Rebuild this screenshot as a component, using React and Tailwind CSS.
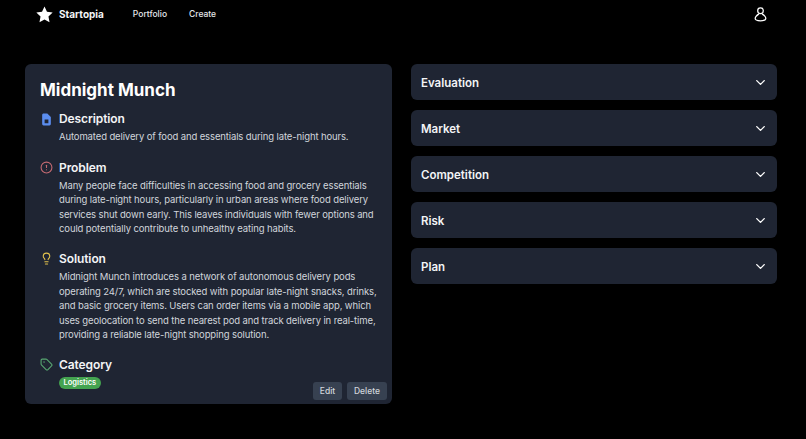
import React from 'react';
import { ChevronDown, CircleAlert, Lightbulb, Tag } from 'lucide-react';

const ACCORDION = ['Evaluation', 'Market', 'Competition', 'Risk', 'Plan'];

const DocIcon = () => (
  <svg viewBox="0 0 24 24" className="w-[13px] h-[13px]" fill="#5b8def">
    <path fillRule="evenodd" d="M6 1h7.500L20 7.500v13A2.500 2.500 0 0 1 17.500 23h-11A2.500 2.500 0 0 1 4 20.500v-17A2.500 2.500 0 0 1 6 1zM8.500 12v7h7v-7z" />
  </svg>
);

const UserIcon = () => (
  <svg viewBox="0 0 24 24" className="w-[15px] h-[15px]" fill="none" stroke="#ffffff" strokeWidth="2">
    <circle cx="12" cy="6" r="4.500" />
    <path d="M9.500 11C6.500 13 3.500 15 3.500 18.500c0 2.500 3.500 3.500 8.500 3.500s8.500-1 8.500-3.500c0-3.500-3-5.500-6-7.500" />
  </svg>
);

const Section = ({ icon, title, className = '', children }) => (
  <section className={className}>
    <div className="flex items-center h-[18px]">
      <span className="w-[19px] flex items-center shrink-0">{icon}</span>
      <h2 className="text-[12px] font-semibold tracking-[-0.1px] text-gray-100">{title}</h2>
    </div>
    <div className="pl-[19px]">{children}</div>
  </section>
);

const Body = ({ lines, className = '' }) => (
  <p className={`text-[9.500px] tracking-[-0.12px] leading-[14.600px] text-gray-300 whitespace-nowrap ${className}`}>
    {lines.map((line) => (
      <span key={line} className="block">{line}</span>
    ))}
  </p>
);

export default function App() {
  return (
    <div className="w-[806px] h-[439px] bg-black overflow-hidden font-['Inter',sans-serif]">
      {/* Navbar */}
      <nav className="flex items-center h-[28px] pl-[36px] pr-[38px]">
        <svg viewBox="0 0 24 24" className="w-[17px] h-[17px]" fill="#ffffff">
          <path d="M12 .8l3.500 7.400 8 1-5.900 5.600 1.500 8.100L12 18.900l-7.100 4 1.500-8.100L.500 9.200l8-1z" />
        </svg>
        <span className="ml-[6px] text-[10px] font-bold text-gray-100">Startopia</span>
        <a className="ml-[29px] text-[8.500px] font-medium text-gray-200">Portfolio</a>
        <a className="ml-[22px] text-[8.500px] font-medium text-gray-200">Create</a>
        <span className="ml-auto"><UserIcon /></span>
      </nav>

      <main className="flex items-start gap-[19px] pl-[25px] pt-[36px]">
        {/* Idea card */}
        <div className="relative w-[367px] h-[340px] rounded-md bg-[#1f2533] pt-[15px] pl-[15px] pr-[13px]">
          <h1 className="text-[17px] font-bold leading-[23px] text-white">Midnight Munch</h1>

          <Section icon={<DocIcon />} title="Description" className="mt-[8px]">
            <Body className="mt-[2px]" lines={['Automated delivery of food and essentials during late-night hours.']} />
          </Section>

          <Section icon={<CircleAlert size={13} color="#c56a72" />} title="Problem" className="mt-[14px]">
            <Body
              className="mt-[2px]"
              lines={[
                'Many people face difficulties in accessing food and grocery essentials',
                'during late-night hours, particularly in urban areas where food delivery',
                'services shut down early. This leaves individuals with fewer options and',
                'could potentially contribute to unhealthy eating habits.',
              ]}
            />
          </Section>

          <Section icon={<Lightbulb size={13} color="#e2c14d" />} title="Solution" className="mt-[13px]">
            <Body
              className="mt-[2px]"
              lines={[
                'Midnight Munch introduces a network of autonomous delivery pods',
                'operating 24/7, which are stocked with popular late-night snacks, drinks,',
                'and basic grocery items. Users can order items via a mobile app, which',
                'uses geolocation to send the nearest pod and track delivery in real-time,',
                'providing a reliable late-night shopping solution.',
              ]}
            />
          </Section>

          <Section icon={<Tag size={13} color="#58a872" />} title="Category" className="mt-[13px]">
            <span className="block w-fit mt-[3px] rounded-full bg-[#44a350] px-[4.500px] text-[7.500px] leading-[12px] font-semibold text-white">
              Logistics
            </span>
          </Section>

          <div className="absolute right-[5px] bottom-[4px] flex gap-[5px]">
            <button className="w-[29px] h-[18px] rounded-[3px] bg-[#374151] text-[8.500px] font-medium text-gray-300">Edit</button>
            <button className="w-[40px] h-[18px] rounded-[3px] bg-[#374151] text-[8.500px] font-medium text-gray-300">Delete</button>
          </div>
        </div>

        {/* Accordion */}
        <div className="w-[366px] flex flex-col gap-[10px]">
          {ACCORDION.map((item) => (
            <div key={item} className="flex items-center justify-between h-[36px] rounded-md bg-[#1f2533] pl-[10px] pr-[9px]">
              <span className="text-[11.500px] font-semibold pt-[3px] text-gray-100">{item}</span>
              <ChevronDown size={15} color="#ffffff" strokeWidth={2.200} />
            </div>
          ))}
        </div>
      </main>
    </div>
  );
}
